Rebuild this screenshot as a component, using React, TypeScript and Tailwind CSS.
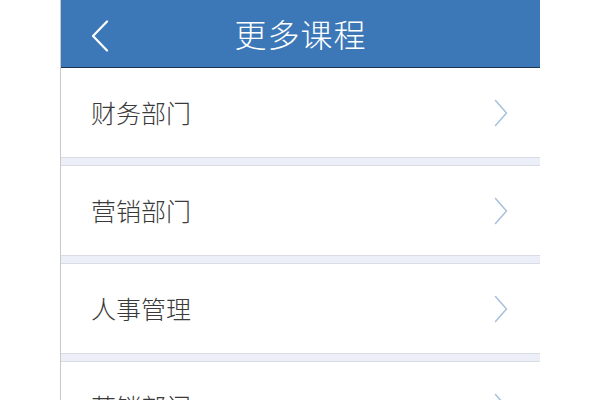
const items = ['财务部门', '营销部门', '人事管理', '营销部门'];

function Chevron({ className }: { className?: string }) {
  return (
    <svg viewBox="0 0 14 28" className={className} fill="none" stroke="currentColor" strokeWidth="1.6" strokeLinecap="round" strokeLinejoin="round">
      <path d="M1.5 1.5 L12.5 14 L1.5 26.5" />
    </svg>
  );
}

export default function App() {
  return (
    <div className="w-[600px] h-[400px] overflow-hidden bg-white flex justify-center" style={{ fontFamily: '"Noto Sans CJK SC", "Noto Sans", sans-serif' }}>
      <div className="w-[480px] flex flex-col border-l border-[#c9c9c9]">
        {/* header */}
        <div className="h-[68px] shrink-0 bg-[#3c78b8] border-b border-[#1d3552] flex items-center relative">
          <svg viewBox="0 0 18 32" className="absolute left-[30px] top-[20px] w-[18px] h-[32px] text-white" fill="none" stroke="currentColor" strokeWidth="2.2" strokeLinecap="round" strokeLinejoin="round">
            <path d="M16 1.5 L2 16 L16 30.5" />
          </svg>
          <div className="flex-1 text-center text-white text-[32px] font-light leading-none tracking-[1px] -mt-[1px]">更多课程</div>
        </div>

        {items.map((name, i) => (
          <div key={i} className="shrink-0">
            <div className="h-[89px] flex items-center justify-between pl-[30px] pr-[32px]">
              <span className="text-[25px] font-light text-[#3a3a3a] leading-none">{name}</span>
              <Chevron className="w-[14px] h-[28px] text-[#a9c3dc]" />
            </div>
            <div className="h-[9px] bg-[#eceff8] border-t border-b border-[#d9dce4]" />
          </div>
        ))}
      </div>
    </div>
  );
}
